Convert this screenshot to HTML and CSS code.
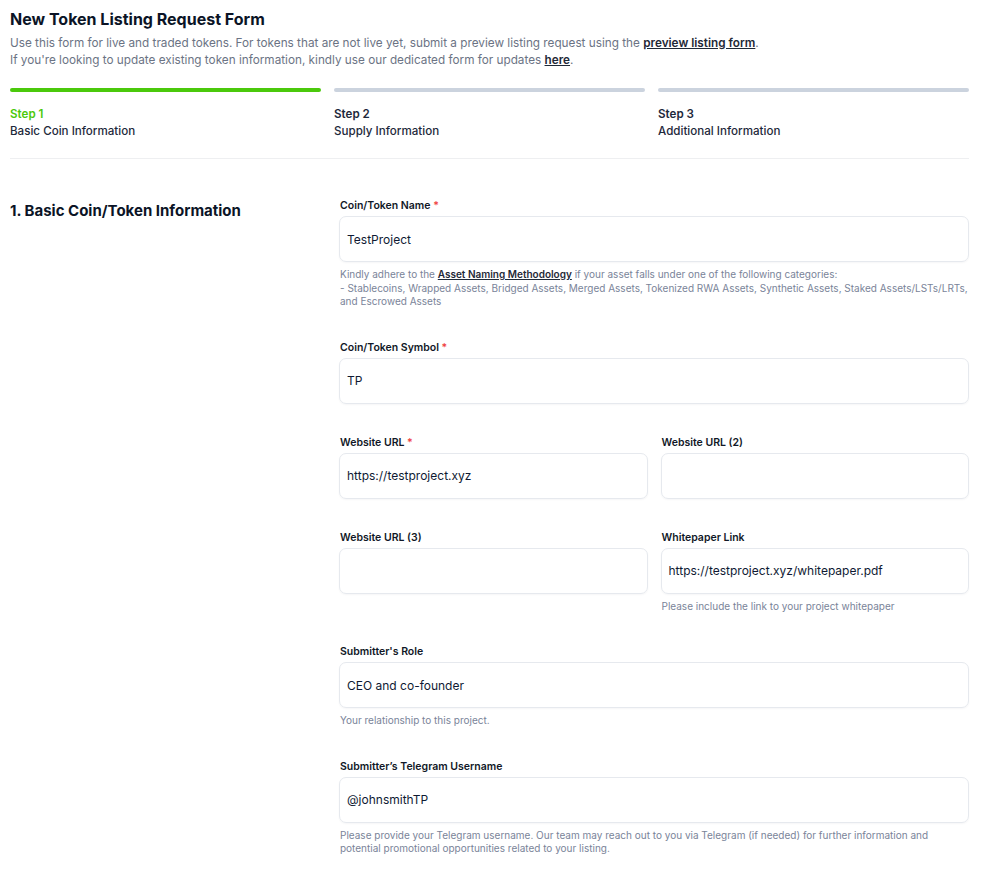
FILE: index.html
```html
<!DOCTYPE html>
<html lang="en">
<head>
<meta charset="utf-8">
<title>New Token Listing Request Form</title>
<link rel="stylesheet" href="styles.css">
</head>
<body>
<div class="page">
  <header class="intro">
    <h1 class="title">New Token Listing Request Form</h1>
    <p class="lead">Use this form for live and traded tokens. For tokens that are not live yet, submit a preview listing request using the <a href="#" class="link">preview listing form</a>.<br>If you're looking to update existing token information, kindly use our dedicated form for updates <a href="#" class="link">here</a>.</p>
  </header>

  <nav class="steps">
    <div class="step step-active">
      <div class="step-bar"></div>
      <div class="step-num">Step 1</div>
      <div class="step-name">Basic Coin Information</div>
    </div>
    <div class="step">
      <div class="step-bar"></div>
      <div class="step-num">Step 2</div>
      <div class="step-name">Supply Information</div>
    </div>
    <div class="step">
      <div class="step-bar"></div>
      <div class="step-num">Step 3</div>
      <div class="step-name">Additional Information</div>
    </div>
  </nav>

  <section class="section">
    <h2 class="section-title">1. Basic Coin/Token Information</h2>
    <div class="fields">
      <div class="field">
        <label class="label">Coin/Token Name <span class="req">*</span></label>
        <div class="input">TestProject</div>
        <p class="help">Kindly adhere to the <a href="#" class="link">Asset Naming Methodology</a> if your asset falls under one of the following categories:<br>- Stablecoins, Wrapped Assets, Bridged Assets, Merged Assets, Tokenized RWA Assets, Synthetic Assets, Staked Assets/LSTs/LRTs, and Escrowed Assets</p>
      </div>
      <div class="field">
        <label class="label">Coin/Token Symbol <span class="req">*</span></label>
        <div class="input">TP</div>
      </div>
      <div class="row">
        <div class="field">
          <label class="label">Website URL <span class="req">*</span></label>
          <div class="input">https://testproject.xyz</div>
        </div>
        <div class="field">
          <label class="label">Website URL (2)</label>
          <div class="input"></div>
        </div>
      </div>
      <div class="row">
        <div class="field">
          <label class="label">Website URL (3)</label>
          <div class="input"></div>
        </div>
        <div class="field">
          <label class="label">Whitepaper Link</label>
          <div class="input">https://testproject.xyz/whitepaper.pdf</div>
          <p class="help">Please include the link to your project whitepaper</p>
        </div>
      </div>
      <div class="field">
        <label class="label">Submitter's Role</label>
        <div class="input">CEO and co-founder</div>
        <p class="help">Your relationship to this project.</p>
      </div>
      <div class="field">
        <label class="label">Submitter’s Telegram Username</label>
        <div class="input">@johnsmithTP</div>
        <p class="help">Please provide your Telegram username. Our team may reach out to you via Telegram (if needed) for further information and potential promotional opportunities related to your listing.</p>
      </div>
    </div>
  </section>
</div>
</body>
</html>
```

FILE: styles.css
```css
* { box-sizing: border-box; }
html, body { margin: 0; padding: 0; background: #fff; }
body {
  font-family: Inter, "Noto Sans", "Liberation Sans", sans-serif;
  color: #0f172a;
}
.page {
  width: 959px;
  margin-left: 10px;
  padding-top: 8px;
}
.title {
  margin: 0;
  font-size: 16px;
  line-height: 22px;
  font-weight: 700;
  color: #0b1426;
}
.lead {
  margin: 5px 0 0;
  font-size: 11.75px;
  line-height: 17px;
  color: #6b7384;
}
.link {
  color: #1f2937;
  font-weight: 600;
  text-decoration: underline;
}
.steps {
  display: grid;
  grid-template-columns: 1fr 1fr 1fr;
  column-gap: 13px;
  margin-top: 19px;
  padding-bottom: 18px;
  border-bottom: 1px solid #eeeff1;
}
.step-bar {
  height: 4px;
  border-radius: 2px;
  background: #cbd3de;
  margin-bottom: 14px;
}
.step-active .step-bar { background: #4bc90c; }
.step-num {
  font-size: 11.6px;
  line-height: 17px;
  font-weight: 600;
  color: #1e293b;
}
.step-active .step-num { color: #4bc90c; }
.step-name {
  font-size: 11.6px;
  line-height: 17px;
  font-weight: 500;
  color: #1e293b;
}
.section {
  display: grid;
  grid-template-columns: 330px 1fr;
  padding-top: 40px;
}
.section-title {
  margin: 2px 0 0;
  font-size: 15px;
  line-height: 20px;
  font-weight: 700;
  color: #0b1426;
}
.fields {
  display: flex;
  flex-direction: column;
  gap: 32px;
}
.row {
  display: grid;
  grid-template-columns: 1fr 1fr;
  column-gap: 14px;
}
.field { display: flex; flex-direction: column; }
.label {
  font-size: 10.5px;
  line-height: 14px;
  font-weight: 600;
  color: #111827;
  margin-bottom: 3px;
}
.req { color: #ef4444; }
.input {
  height: 46px;
  margin-left: -1px;
  border: 1px solid #e6e9ee;
  border-radius: 7px;
  box-shadow: 0 1px 2px rgba(15, 23, 42, 0.04);
  padding: 0 7px;
  display: flex;
  align-items: center;
  font-size: 12px;
  color: #0f1a33;
}
.help {
  margin: 6px 0 0;
  font-size: 10px;
  line-height: 13.5px;
  color: #7a8499;
}
.help .link { color: #1f2937; }
```
